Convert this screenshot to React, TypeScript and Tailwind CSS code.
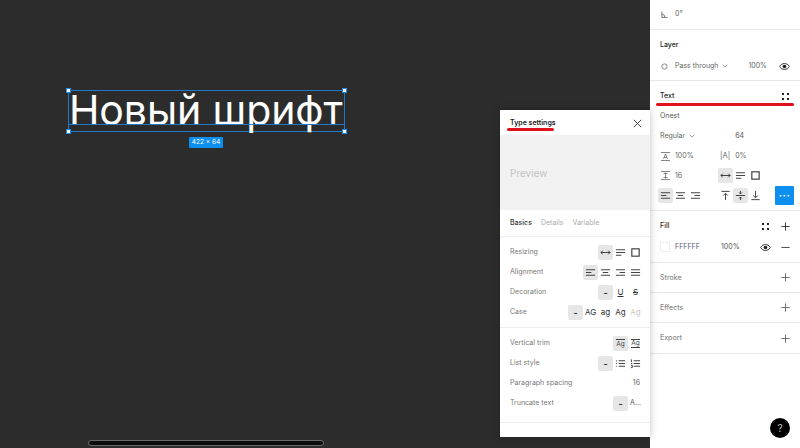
import React from "react";

const S = ({ size = 11, children, color = "#333", w = 1 }: { size?: number; children: React.ReactNode; color?: string; w?: number }) => (
  <svg width={size} height={size} viewBox="0 0 12 12" fill="none" stroke={color} strokeWidth={w} className="shrink-0">
    {children}
  </svg>
);

const Hug = () => (
  <S>
    <path d="M1 6h10M3 4 1 6l2 2M9 4l2 2-2 2" />
  </S>
);
const AutoH = () => (
  <S>
    <path d="M1 3h10M1 6h10M1 9h6" />
  </S>
);
const Box = () => (
  <S>
    <rect x="2" y="2" width="8" height="8" strokeWidth="1.2" />
  </S>
);
const AL = () => (
  <S>
    <path d="M1 3h10M1 6h6M1 9h10" />
  </S>
);
const AC = () => (
  <S>
    <path d="M1 3h10M3 6h6M1 9h10" />
  </S>
);
const AR = () => (
  <S>
    <path d="M1 3h10M5 6h6M1 9h10" />
  </S>
);
const AJ = () => (
  <S>
    <path d="M1 3h10M1 6h10M1 9h10" />
  </S>
);
const Plus = ({ c = "#333" }: { c?: string }) => (
  <S color={c}>
    <path d="M6 1.5v9M1.5 6h9" />
  </S>
);
const Minus = () => (
  <S color="#444">
    <path d="M1.5 6h9" />
  </S>
);
const Eye = () => (
  <svg width="11" height="11" viewBox="0 0 12 12" className="shrink-0">
    <path d="M.7 6C2 3.8 3.9 2.8 6 2.8S10 3.8 11.3 6C10 8.2 8.100 9.200 6 9.200S2 8.200.7 6Z" fill="none" stroke="#222" strokeWidth="1" />
    <circle cx="6" cy="6" r="2" fill="#222" />
  </svg>
);
const Dots = () => (
  <svg width="9" height="9" viewBox="0 0 9 9" className="shrink-0" fill="#222">
    <rect x="1" y="1" width="2" height="2" />
    <rect x="6" y="1" width="2" height="2" />
    <rect x="1" y="6" width="2" height="2" />
    <rect x="6" y="6" width="2" height="2" />
  </svg>
);
const Chev = () => (
  <svg width="6" height="4" viewBox="0 0 6 4" fill="none" stroke="#888" strokeWidth="0.8" className="shrink-0">
    <path d="m.7.8 2.300 2.300L5.300.8" />
  </svg>
);

const Btn = ({ active, children, className = "" }: { active?: boolean; children: React.ReactNode; className?: string }) => (
  <div className={`flex h-[15px] w-[15px] items-center justify-center rounded-[2px] ${active ? "bg-[#e6e6e6]" : ""} ${className}`}>{children}</div>
);

const Dash = () => <span className="text-[9px] font-bold leading-none text-[#333]">-</span>;

const Row = ({ label, children }: { label: string; children: React.ReactNode }) => (
  <div className="flex h-5 items-center justify-between pl-[10px] pr-[7px]">
    <span className="text-[7px] text-[#777]">{label}</span>
    <div className="flex items-center">{children}</div>
  </div>
);

const EmptySection = ({ label, h }: { label: string; h: string }) => (
  <div className={`flex ${h} items-center justify-between border-b border-[#e8e8e8] pl-[10px] pr-[9px]`}>
    <span className="pt-[1px] text-[7px] font-medium text-[#8a8a8a]">{label}</span>
    <Plus c="#666" />
  </div>
);

export default function App() {
  return (
    <div className="relative flex h-[448px] w-[800px] overflow-hidden bg-[#2c2c2c] font-['Inter',sans-serif]">
      {/* Canvas */}
      <div className="relative flex-1">
        <div className="absolute left-[68px] top-[90px] h-[42px] w-[277px] border border-[#1f78c8]">
          <div className="whitespace-nowrap text-[41px] font-normal leading-[39px] tracking-[-0.1px] text-white">Новый шрифт</div>
          <div className="absolute left-0 right-0 top-[33px] h-[1px] bg-[#1f78c8]" />
          <div className="absolute -left-[3px] -top-[3px] h-[5px] w-[5px] border border-[#1f8fe8] bg-white" />
          <div className="absolute -right-[3px] -top-[3px] h-[5px] w-[5px] border border-[#1f8fe8] bg-white" />
          <div className="absolute -bottom-[3px] -left-[3px] h-[5px] w-[5px] border border-[#1f8fe8] bg-white" />
          <div className="absolute -bottom-[3px] -right-[3px] h-[5px] w-[5px] border border-[#1f8fe8] bg-white" />
        </div>
        <div className="absolute left-[189px] top-[137px] flex h-[11px] w-[34px] items-center justify-center rounded-[1px] bg-[#0d8fef] text-[6.500px] text-white">
          422 × 64
        </div>
        <div className="absolute left-[88px] top-[440px] h-[6px] w-[236px] rounded-full border border-[#6a6a6a] bg-[#0c0c0c]" />
      </div>

      {/* Right panel */}
      <div className="flex w-[150px] flex-col bg-white text-[7px] text-[#444]">
        <div className="flex h-[30px] items-center gap-[7px] border-b border-[#e8e8e8] pl-[11px]">
          <svg width="7" height="7" viewBox="0 0 8 8" fill="none" stroke="#555" strokeWidth="0.9">
            <path d="M1 0.500V7.500H7.500M1 3.500a4 4 0 0 1 3.500 4" />
          </svg>
          <span className="text-[#666]">0°</span>
        </div>
        <div className="flex h-[51px] flex-col border-b border-[#e8e8e8] pl-[10px] pr-[10px]">
          <div className="flex h-[30px] items-center pt-[1px] font-medium text-[#222]">Layer</div>
          <div className="flex h-[12px] items-center">
            <svg width="7" height="7" viewBox="0 0 8 8" fill="none" stroke="#777" className="ml-[1px] mr-[7px]">
              <circle cx="4" cy="4" r="3" />
            </svg>
            <span className="mr-1 text-[#666]">Pass through</span>
            <Chev />
            <span className="ml-auto mr-[12px] text-[#666]">100%</span>
            <Eye />
          </div>
        </div>
        <div className="flex h-[130px] flex-col border-b border-[#e8e8e8] pl-[10px]">
          <div className="flex h-[25px] items-center justify-between pr-[10px] pt-[5px] font-medium text-[#222]">
            <span>Text</span>
            <Dots />
          </div>
          <div className="flex h-5 items-center text-[#555]">Onest</div>
          <div className="flex h-5 items-center">
            <span className="mr-1 text-[#666]">Regular</span>
            <Chev />
            <span className="ml-[40px] text-[#555]">64</span>
          </div>
          <div className="flex h-5 items-center text-[#666]">
            <svg width="11" height="9" viewBox="0 0 11 9" fill="none" stroke="#666" strokeWidth="0.8" className="mr-[4px]">
              <path d="M1 .500h9M1 8.500h9M3.500 7 5.500 2l2 5M4.300 5.500h2.400" />
            </svg>
            <span className="w-[45px]">100%</span>
            <span className="mr-[5px] text-[7.500px] text-[#666]">|A|</span>
            <span>0%</span>
          </div>
          <div className="flex h-[19px] items-center text-[#666]">
            <svg width="11" height="9" viewBox="0 0 11 9" fill="none" stroke="#666" strokeWidth="0.8" className="mr-[4px]">
              <path d="M1 .500h9M1 8.500h9M5.500 1.500v6M3.500 2.500h4M3.500 6.500h4" />
            </svg>
            <span className="w-[24px] pt-[1px]">16</span>
            <div className="ml-[19px] flex items-center">
              <Btn active><Hug /></Btn>
              <Btn><AutoH /></Btn>
              <Btn><Box /></Btn>
            </div>
          </div>
          <div className="-ml-[2px] flex h-5 items-center">
            <Btn active><AL /></Btn>
            <Btn><AC /></Btn>
            <Btn><AR /></Btn>
            <div className="ml-[15px] flex items-center">
              <Btn><S><path d="M1.500 1.500h9M6 11V4M3.500 6 6 3.500 8.500 6" /></S></Btn>
              <Btn active><S><path d="M1 6h10M6 1v3M4.500 2.800 6 4.300l1.500-1.500M6 11V8M4.500 9.200 6 7.700l1.500 1.500" /></S></Btn>
              <Btn><S><path d="M1.500 10.500h9M6 1v7M3.500 6 6 8.500 8.500 6" /></S></Btn>
            </div>
            <div className="ml-[12px] flex h-[19px] w-[19px] items-center justify-center rounded-[1px] bg-[#0d8fef] text-[10px] font-bold leading-none text-white">
              <span className="-mt-[1px] tracking-[0.5px]">···</span>
            </div>
          </div>
        </div>
        <div className="flex h-[52px] flex-col border-b border-[#e8e8e8] pl-[10px] pr-[9px]">
          <div className="flex h-[31px] items-center justify-between font-medium text-[#4a1c1c]">
            <span>Fill</span>
            <div className="flex items-center gap-[10px]">
              <Dots />
              <Plus />
            </div>
          </div>
          <div className="flex h-[10px] items-center">
            <div className="mr-[5px] h-[10px] w-[10px] border border-[#eeeeee] bg-white" />
            <span className="w-[46px] text-[#5a5a7a]">FFFFFF</span>
            <span className="text-[#555]">100%</span>
            <div className="ml-auto flex items-center gap-[9px]">
              <Eye />
              <Minus />
            </div>
          </div>
        </div>
        <EmptySection label="Stroke" h="h-[30px]" />
        <EmptySection label="Effects" h="h-[30px]" />
        <EmptySection label="Export" h="h-[31px]" />
      </div>

      {/* Red annotations */}
      <div className="absolute left-[656px] top-[103px] h-[2.500px] w-[138px] rounded-full bg-[#e0101c]" />

      {/* Help */}
      <div className="absolute left-[770px] top-[418px] flex h-5 w-5 items-center justify-center rounded-full bg-black text-[10px] text-[#bbbbbb]">?</div>

      {/* Type settings modal */}
      <div className="absolute left-[500px] top-[110px] flex h-[327px] w-[150px] flex-col bg-white text-[7px] shadow-[0_0_7px_rgba(0,0,0,0.25)]">
        <div className="relative flex h-[25px] shrink-0 items-center justify-between pl-[10px] pr-[8px] pt-[1px]">
          <span className="font-semibold text-[#222]">Type settings</span>
          <svg width="9" height="9" viewBox="0 0 9 9" fill="none" stroke="#333" strokeWidth="0.9">
            <path d="m.8.8 7.400 7.400M8.200.8.800 8.200" />
          </svg>
          <div className="absolute left-[7px] top-[18px] h-[2.500px] w-[47px] rounded-full bg-[#e0101c]" />
        </div>
        <div className="flex h-[75px] shrink-0 items-center bg-[#f2f2f2] pl-[10px] pt-[1px] text-[10px] text-[#c4c4c4]">Preview</div>
        <div className="flex h-[27px] shrink-0 items-center gap-[9px] border-b border-[#ececec] pl-[10px] pt-[1px]">
          <span className="font-medium text-[#333]">Basics</span>
          <span className="text-[#aaaaaa]">Details</span>
          <span className="text-[#aaaaaa]">Variable</span>
        </div>
        <div className="flex h-[91px] shrink-0 flex-col justify-start border-b border-[#ececec] pt-[5px]">
          <Row label="Resizing">
            <Btn active><Hug /></Btn>
            <Btn><AutoH /></Btn>
            <Btn><Box /></Btn>
          </Row>
          <Row label="Alignment">
            <Btn active><AL /></Btn>
            <Btn><AC /></Btn>
            <Btn><AR /></Btn>
            <Btn><AJ /></Btn>
          </Row>
          <Row label="Decoration">
            <Btn active><Dash /></Btn>
            <Btn>
              <span className="text-[8px] leading-none text-[#333] underline">U</span>
            </Btn>
            <Btn>
              <span className="text-[8px] leading-none text-[#333] line-through">S</span>
            </Btn>
          </Row>
          <Row label="Case">
            <Btn active><Dash /></Btn>
            <Btn><span className="text-[8px] text-[#333]">AG</span></Btn>
            <Btn><span className="text-[8px] text-[#333]">ag</span></Btn>
            <Btn><span className="text-[8px] text-[#333]">Ag</span></Btn>
            <Btn><span className="text-[8px] text-[#c8c8c8]">Ag</span></Btn>
          </Row>
        </div>
        <div className="flex h-[95px] shrink-0 flex-col border-b border-[#ececec] pt-[5px]">
          <Row label="Vertical trim">
            <Btn active>
              <span className="border-t border-[#444] text-[6.500px] leading-[8px] text-[#444]">Ag</span>
            </Btn>
            <Btn>
              <span className="border-y border-[#444] text-[6.500px] leading-[7px] text-[#444]">Ag</span>
            </Btn>
          </Row>
          <Row label="List style">
            <Btn active><Dash /></Btn>
            <Btn>
              <S><path d="M1 3h1M4 3h7M1 6h1M4 6h7M1 9h1M4 9h7" /></S>
            </Btn>
            <Btn>
              <S><path d="M1.500 1.500v3M1 6h1.500M1 8h1.500v2.500H1M4 3h7M4 6h7M4 9h7" /></S>
            </Btn>
          </Row>
          <Row label="Paragraph spacing">
            <span className="mr-[3px] text-[#666]">16</span>
          </Row>
          <Row label="Truncate text">
            <Btn active><Dash /></Btn>
            <Btn><span className="text-[#555]">A...</span></Btn>
          </Row>
        </div>
      </div>
    </div>
  );
}
